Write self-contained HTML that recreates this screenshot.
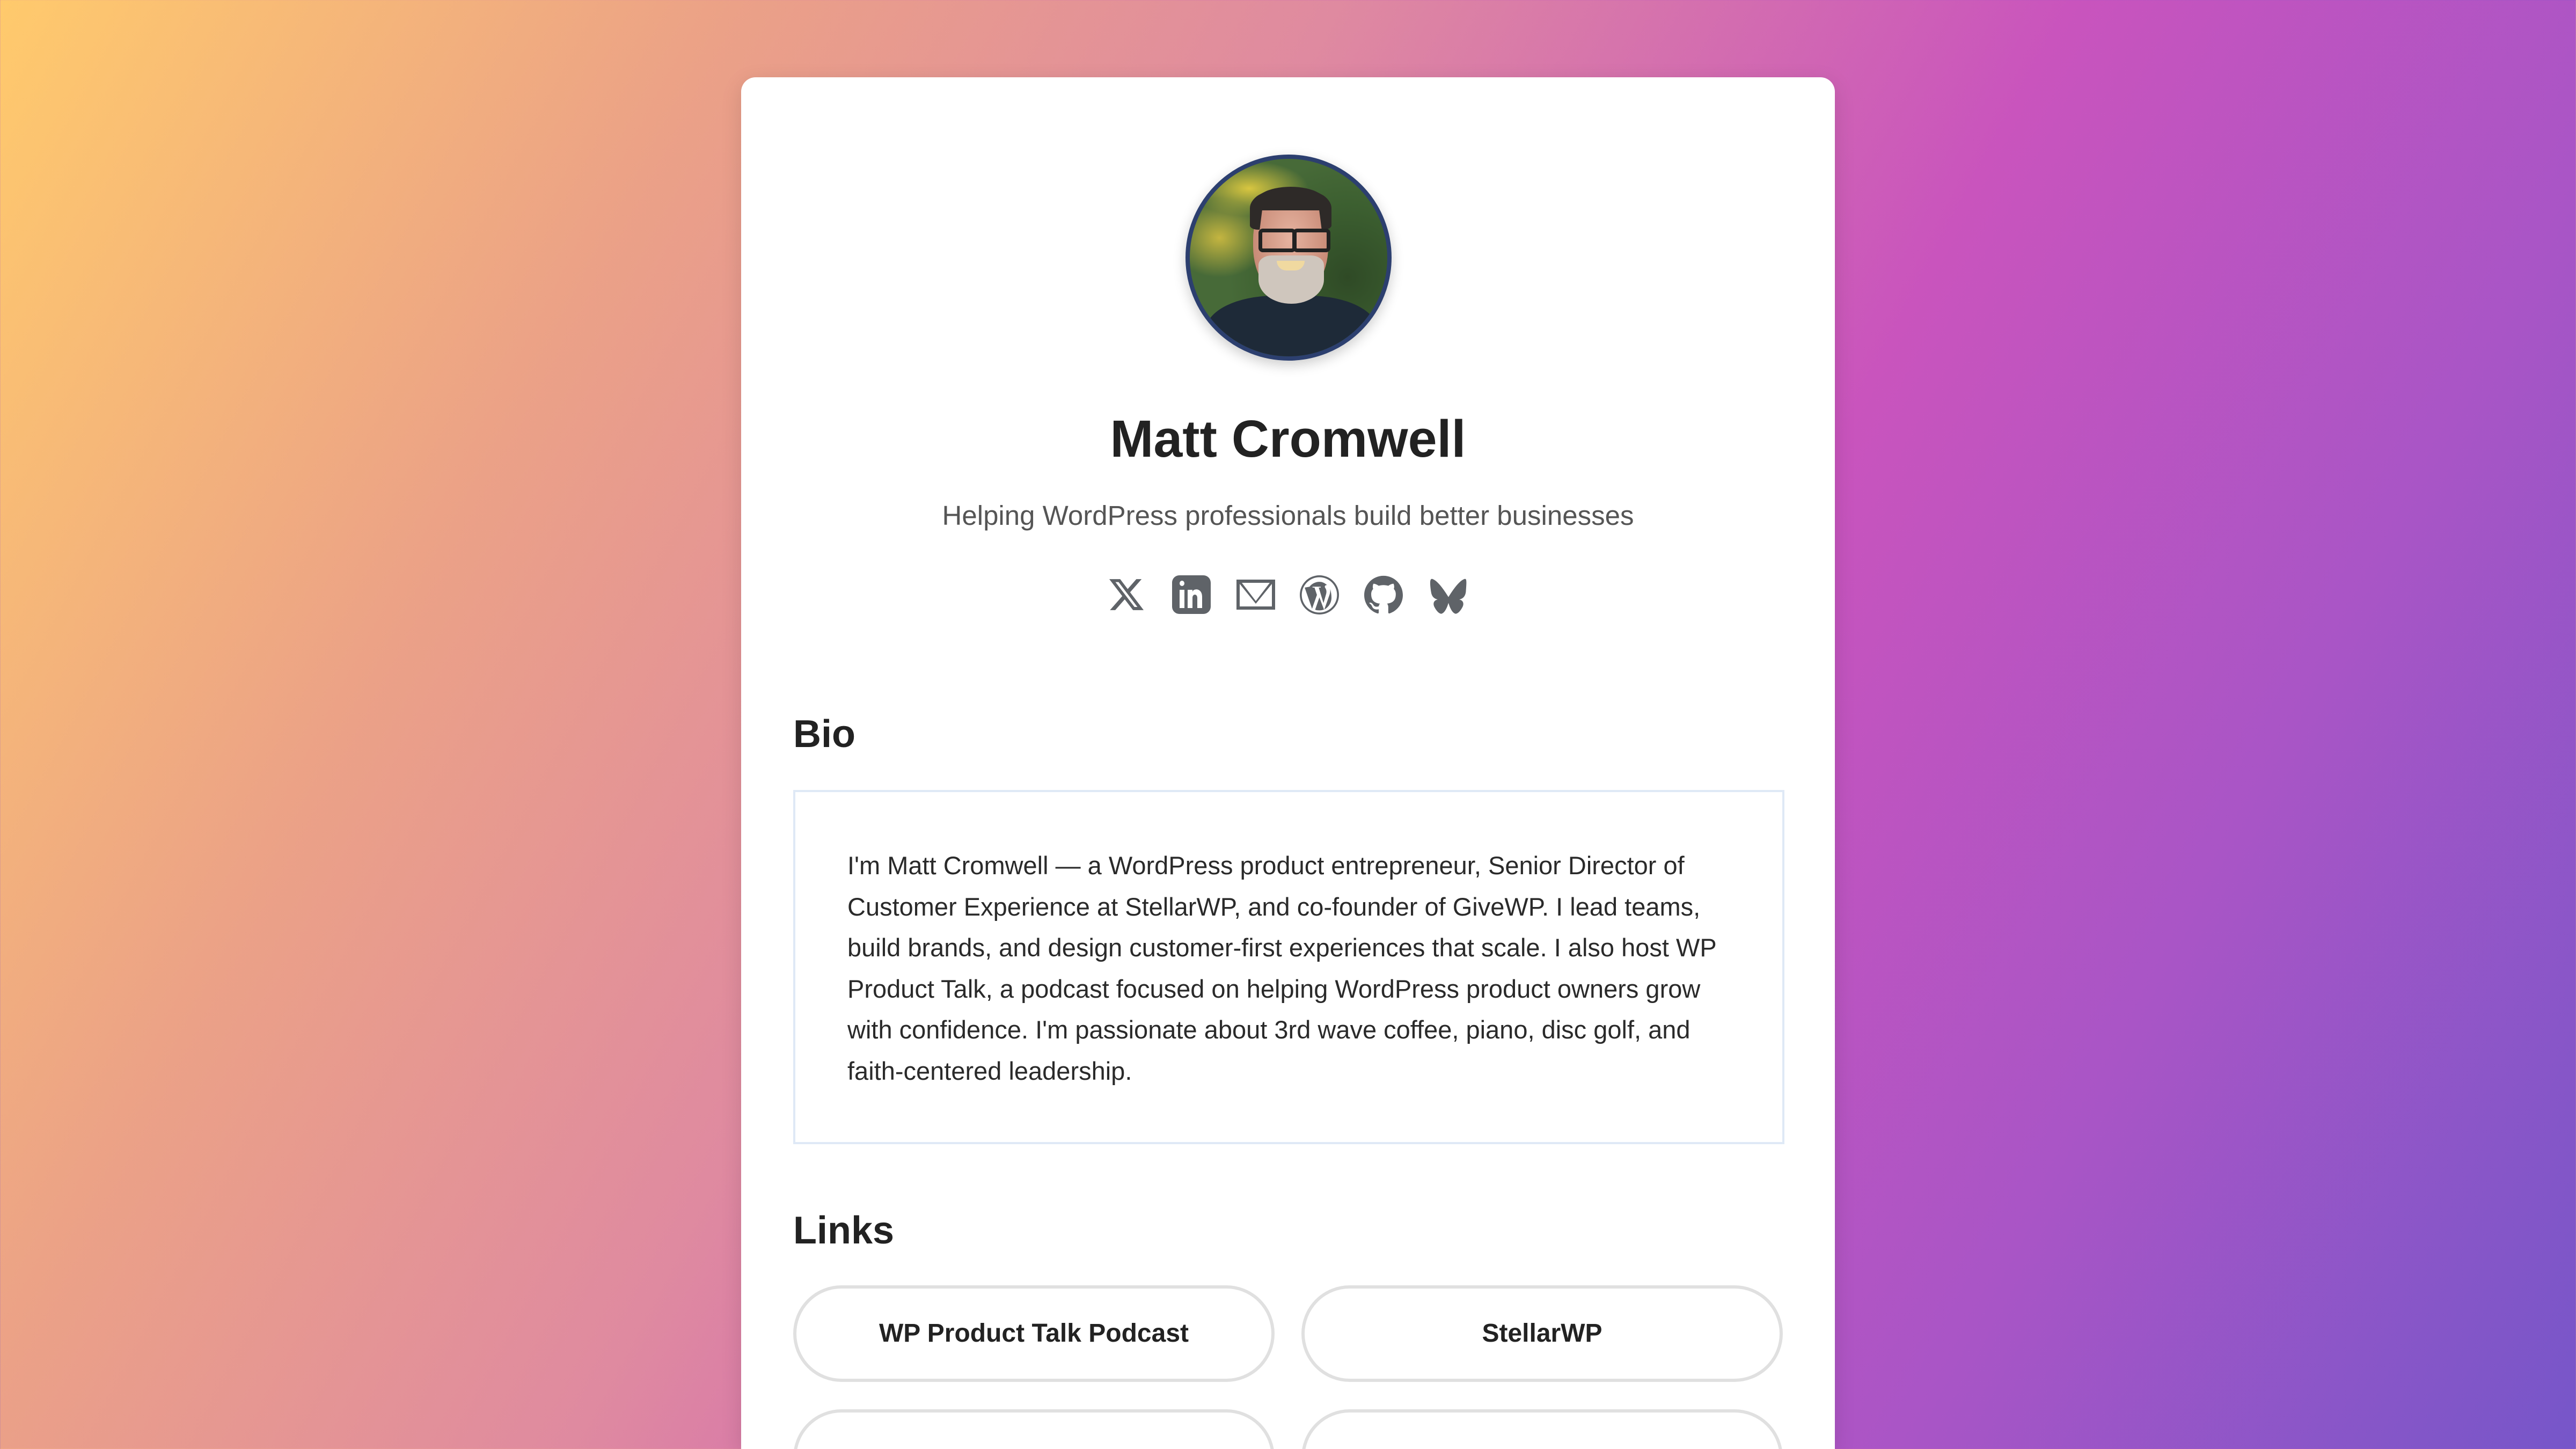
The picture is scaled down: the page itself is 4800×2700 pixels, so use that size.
<!DOCTYPE html>
<html><head><meta charset="utf-8"><style>
html,body{margin:0;padding:0;width:4800px;height:2700px;overflow:hidden}
body{position:relative;font-family:"Liberation Sans",sans-serif;
background:linear-gradient(118deg,#ffca6c 0%,#eba187 22%,#df8aa0 40%,#c954bd 62%,#a955c6 80%,#7656c9 100%);}
.card{position:absolute;left:1381px;top:144px;width:2038px;height:2556px;background:#fff;border-radius:27px 27px 0 0;box-shadow:0 10px 40px rgba(0,0,0,.12)}
.av{position:absolute;left:2209px;top:288px;width:368px;height:368px;border:8px solid #2c3f6f;border-radius:50%;overflow:hidden;box-shadow:0 8px 24px rgba(0,0,0,.2);
background:radial-gradient(ellipse 30% 14% at 30% 15%,#d8c640 0%,rgba(216,198,64,0) 100%),radial-gradient(ellipse 25% 20% at 15% 40%,#c4b540,rgba(196,181,64,0)),radial-gradient(ellipse 60% 60% at 80% 60%,#2f4a26,#3c5f30 60%,#476a38);}
.face{position:absolute;left:118px;top:60px;width:140px;height:200px;border-radius:45% 45% 48% 48%;background:radial-gradient(ellipse at 50% 45%,#e6b3a0,#c98c78 70%,#a8705e);}
.hair{position:absolute;left:112px;top:52px;width:152px;height:80px;border-radius:50% 50% 10% 10%;background:#2e2a28;clip-path:polygon(0 100%,0 30%,30% 0,70% 0,100% 30%,100% 100%,88% 100%,85% 55%,15% 55%,12% 100%)}
.beard{position:absolute;left:128px;top:180px;width:122px;height:90px;border-radius:20% 20% 50% 50%;background:#cfc6bd}
.mouth{position:absolute;left:162px;top:190px;width:52px;height:18px;border-radius:0 0 30px 30px;background:#f0d9a0}
.glass{position:absolute;top:130px;width:56px;height:30px;border:7px solid #222;border-radius:8px}
.shirt{position:absolute;left:30px;top:255px;width:320px;height:160px;border-radius:40% 40% 0 0;background:#1e2a38}
.name{position:absolute;left:1381px;width:2038px;top:758px;text-align:center;font-weight:bold;font-size:97px;color:#222;line-height:120px}
.tag{position:absolute;left:1381px;width:2038px;top:928px;text-align:center;font-size:51px;color:#555;line-height:66px}
.icons svg{position:absolute;fill:#5f6368}
h2{position:absolute;left:1478px;margin:0;font-size:72px;color:#222;line-height:90px}
.bio{position:absolute;left:1478px;top:1472px;width:1847px;height:660px;border:4px solid #dfe9f6;box-sizing:border-box}
.bio p{margin:0;position:absolute;left:97px;top:99px;font-size:47px;line-height:76.6px;color:#2a2a2a;white-space:nowrap}
.btn{position:absolute;width:897px;height:180px;border:6px solid #e0e0e0;box-sizing:border-box;border-radius:90px;text-align:center;line-height:168px;font-weight:bold;font-size:48px;color:#222;background:#fff}
</style></head><body>
<div class="card"></div>
<div class="av"><div class="shirt"></div><div class="face"></div><div class="hair"></div><div class="beard"></div><div class="mouth"></div><div class="glass" style="left:128px"></div><div class="glass" style="left:192px"></div></div>
<div class="name">Matt Cromwell</div>
<div class="tag">Helping WordPress professionals build better businesses</div>
<div class="icons">
<svg style="left:2066px;top:1076px" width="66" height="64" viewBox="0 0 24 24"><path d="M18.901 1.153h3.68l-8.04 9.19L24 22.846h-7.406l-5.8-7.584-6.638 7.584H.474l8.6-9.83L0 1.154h7.594l5.243 6.932ZM17.61 20.644h2.039L6.486 3.24H4.298Z"/></svg>
<svg style="left:2184px;top:1072px" width="72" height="72" viewBox="0 0 72 72"><path d="M14 0h44c8 0 14 6 14 14v44c0 8-6 14-14 14H14C6 72 0 66 0 58V14C0 6 6 0 14 0zM14 27v34h9V27zM18.5 10a4.5 5 0 100 10 4.5 5 0 100-10zM29 27v34h9V42c0-8 9-8 9 0v19h9V40c0-17-17-16-18-9v-4z" fill-rule="evenodd"/></svg>
<svg style="left:2304px;top:1080px" width="72" height="56" viewBox="0 0 72 56"><path d="M0 0h72v56H0zM6 8v42h60V8L36 45zM10 6l26 34 26-34z" fill-rule="evenodd"/></svg>
<svg style="left:2422px;top:1072px" width="73" height="73" viewBox="0 0 24 24"><path d="M12 0a12 12 0 100 24 12 12 0 000-24zm0 1.2a10.8 10.8 0 110 21.6 10.8 10.8 0 010-21.6zM3 7.5l4.5 13 3-8.5-1.5-4.5H7.8V7h5v.5h-1.2L14.5 17l1.4-4.8c.8-2.4.3-3.6-.4-4.6-.5-.8.1-1.6.9-1.6h.3C15 4.5 13.6 4 12 4 9.6 4 7.2 5.2 6 7zm15.6.8c.2 1.6-.1 2.8-.6 4.2l-3 8.5c2.7-1.5 4.4-4.2 4.4-7.3 0-2-.3-3.6-.8-5.4zM12 13.5l-2.6 7.6c.8.3 1.7.4 2.6.4 1 0 1.9-.2 2.8-.5z"/></svg>
<svg style="left:2542px;top:1072px" width="72" height="72" viewBox="0 0 24 24"><path d="M12 .297c-6.63 0-12 5.373-12 12 0 5.303 3.438 9.8 8.205 11.385.6.113.82-.258.82-.577 0-.285-.01-1.04-.015-2.04-3.338.724-4.042-1.61-4.042-1.61C4.422 18.07 3.633 17.7 3.633 17.7c-1.087-.744.084-.729.084-.729 1.205.084 1.838 1.236 1.838 1.236 1.07 1.835 2.809 1.305 3.495.998.108-.776.417-1.305.76-1.605-2.665-.3-5.466-1.332-5.466-5.93 0-1.31.465-2.38 1.235-3.22-.135-.303-.54-1.523.105-3.176 0 0 1.005-.322 3.3 1.23.96-.267 1.98-.399 3-.405 1.02.006 2.04.138 3 .405 2.28-1.552 3.285-1.23 3.285-1.23.645 1.653.24 2.873.12 3.176.765.84 1.23 1.91 1.23 3.22 0 4.61-2.805 5.625-5.475 5.92.42.36.81 1.096.81 2.22 0 1.606-.015 2.896-.015 3.286 0 .315.21.69.825.57C20.565 22.092 24 17.592 24 12.297c0-6.627-5.373-12-12-12"/></svg>
<svg style="left:2662px;top:1074px" width="74" height="74" viewBox="0 0 48 48"><path d="M4 3c5 1 12 9 20 22C32 12 39 4 44 3c2 0 2 3 1 16-1 6-4 8-8 9 5 1 6 5 4 9-3 6-7 9-9 8-3-1-6-6-8-13-2 7-5 12-8 13-2 1-6-2-9-8-2-4-1-8 4-9-4-1-7-3-8-9C1 6 2 3 4 3z"/></svg>
</div>
<h2 style="top:1323px">Bio</h2>
<div class="bio"><p>I'm Matt Cromwell — a WordPress product entrepreneur, Senior Director of<br>Customer Experience at StellarWP, and co-founder of GiveWP. I lead teams,<br>build brands, and design customer-first experiences that scale. I also host WP<br>Product Talk, a podcast focused on helping WordPress product owners grow<br>with confidence. I'm passionate about 3rd wave coffee, piano, disc golf, and<br>faith-centered leadership.</p></div>
<h2 style="top:2248px">Links</h2>
<div class="btn" style="left:1478px;top:2395px">WP Product Talk Podcast</div>
<div class="btn" style="left:2425px;top:2395px">StellarWP</div>
<div class="btn" style="left:1478px;top:2626px"></div>
<div class="btn" style="left:2425px;top:2626px"></div>
</body></html>
